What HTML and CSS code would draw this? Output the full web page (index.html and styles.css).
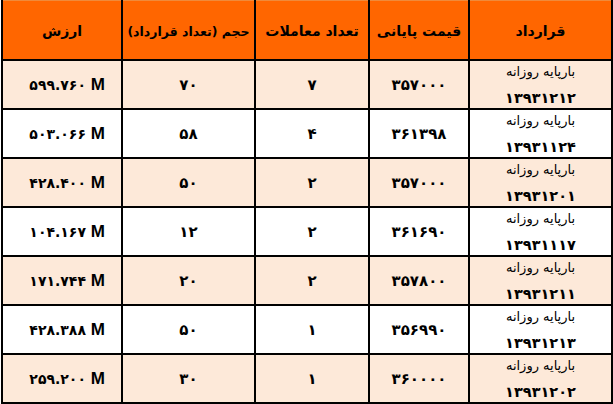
FILE: index.html
```html
<!DOCTYPE html>
<html lang="fa" dir="rtl">
<head>
<meta charset="utf-8">
<title>قرارداد</title>
<link rel="stylesheet" href="styles.css">
</head>
<body>
<div class="grid">
  <div class="cell head">قرارداد</div>
  <div class="cell head">قیمت پایانی</div>
  <div class="cell head">تعداد معاملات</div>
  <div class="cell head head-long">حجم (تعداد قرارداد)</div>
  <div class="cell head">ارزش</div>

  <div class="cell odd contract"><span>بارپایه روزانه</span><span class="code">۱۳۹۳۱۲۱۲</span></div>
  <div class="cell odd">۳۵۷۰۰۰</div>
  <div class="cell odd">۷</div>
  <div class="cell odd">۷۰</div>
  <div class="cell odd value"><span class="val" dir="ltr">۵۹۹.۷۶۰ <b class="m">M</b></span></div>

  <div class="cell even contract"><span>بارپایه روزانه</span><span class="code">۱۳۹۳۱۱۲۴</span></div>
  <div class="cell even">۳۶۱۳۹۸</div>
  <div class="cell even">۴</div>
  <div class="cell even">۵۸</div>
  <div class="cell even value"><span class="val" dir="ltr">۵۰۳.۰۶۶ <b class="m">M</b></span></div>

  <div class="cell odd contract"><span>بارپایه روزانه</span><span class="code">۱۳۹۳۱۲۰۱</span></div>
  <div class="cell odd">۳۵۷۰۰۰</div>
  <div class="cell odd">۲</div>
  <div class="cell odd">۵۰</div>
  <div class="cell odd value"><span class="val" dir="ltr">۴۲۸.۴۰۰ <b class="m">M</b></span></div>

  <div class="cell even contract"><span>بارپایه روزانه</span><span class="code">۱۳۹۳۱۱۱۷</span></div>
  <div class="cell even">۳۶۱۶۹۰</div>
  <div class="cell even">۲</div>
  <div class="cell even">۱۲</div>
  <div class="cell even value"><span class="val" dir="ltr">۱۰۴.۱۶۷ <b class="m">M</b></span></div>

  <div class="cell odd contract"><span>بارپایه روزانه</span><span class="code">۱۳۹۳۱۲۱۱</span></div>
  <div class="cell odd">۳۵۷۸۰۰</div>
  <div class="cell odd">۲</div>
  <div class="cell odd">۲۰</div>
  <div class="cell odd value"><span class="val" dir="ltr">۱۷۱.۷۴۴ <b class="m">M</b></span></div>

  <div class="cell even contract"><span>بارپایه روزانه</span><span class="code">۱۳۹۳۱۲۱۳</span></div>
  <div class="cell even">۳۵۶۹۹۰</div>
  <div class="cell even">۱</div>
  <div class="cell even">۵۰</div>
  <div class="cell even value"><span class="val" dir="ltr">۴۲۸.۳۸۸ <b class="m">M</b></span></div>

  <div class="cell odd contract"><span>بارپایه روزانه</span><span class="code">۱۳۹۳۱۲۰۲</span></div>
  <div class="cell odd">۳۶۰۰۰۰</div>
  <div class="cell odd">۱</div>
  <div class="cell odd">۳۰</div>
  <div class="cell odd value"><span class="val" dir="ltr">۲۵۹.۲۰۰ <b class="m">M</b></span></div>
</div>
</body>
</html>
```

FILE: styles.css
```css
html, body {
  margin: 0;
  padding: 0;
  background: #ffffff;
}

.grid {
  display: grid;
  direction: rtl;
  width: 612px;
  grid-template-columns: 141px 98px 112px 131px 118px;
  grid-template-rows: 59px repeat(7, 47px);
  gap: 2px;
  padding: 0 2px 2px 2px;
  box-sizing: border-box;
  background: #000000;
  font-family: "DejaVu Sans", sans-serif;
  font-weight: bold;
  color: #000000;
}

.cell {
  display: flex;
  align-items: center;
  justify-content: center;
  font-size: 15px;
  overflow: hidden;
  white-space: nowrap;
}

.head {
  background: #ff6600;
  font-size: 14px;
  border-top: 1px solid #f08a3a;
  padding-top: 2px;
}

.head-long {
  font-size: 12.5px;
}

.odd {
  background: #fde9d9;
}

.even {
  background: #ffffff;
}

.contract {
  flex-direction: column;
  line-height: 27px;
  font-weight: normal;
  font-size: 13px;
  overflow: visible;
}

.code {
  font-weight: bold;
  font-size: 14.5px;
}

.value {
  justify-content: flex-start;
  padding-right: 16px;
  font-size: 14px;
}

.val {
  display: inline-block;
}

.m {
  font-family: "Liberation Sans", Arial, sans-serif;
  font-size: 17px;
  font-weight: bold;
}
```
